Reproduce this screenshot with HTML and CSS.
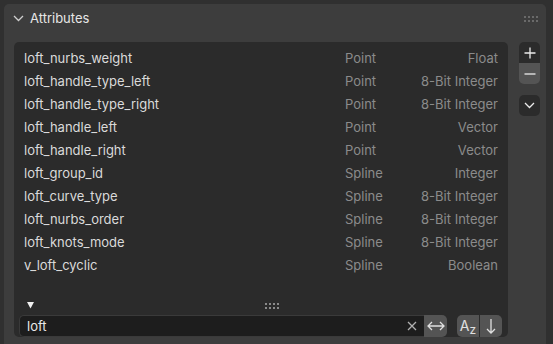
FILE: index.html
```html
<!DOCTYPE html>
<html lang="en">
<head>
    <meta charset="UTF-8">
    <title>Attributes</title>
    <link rel="stylesheet" href="styles.css">
</head>
<body>

<div class="panel">
    <div class="panel-header">
        <svg class="chevron" width="11" height="7" viewBox="0 0 11 7">
            <path d="M1 1 L5.5 5.5 L10 1" fill="none" stroke="#cfcfcf" stroke-width="1.3"/>
        </svg>
        <span class="panel-title">Attributes</span>
        <div class="grip header-grip">
            <i></i><i></i><i></i><i></i><i></i><i></i><i></i><i></i>
        </div>
    </div>

    <div class="panel-body">
        <div class="list-box">
            <div class="rows">
                <div class="row"><span class="name">loft_nurbs_weight</span><span class="domain">Point</span><span class="type">Float</span></div>
                <div class="row"><span class="name">loft_handle_type_left</span><span class="domain">Point</span><span class="type">8-Bit Integer</span></div>
                <div class="row"><span class="name">loft_handle_type_right</span><span class="domain">Point</span><span class="type">8-Bit Integer</span></div>
                <div class="row"><span class="name">loft_handle_left</span><span class="domain">Point</span><span class="type">Vector</span></div>
                <div class="row"><span class="name">loft_handle_right</span><span class="domain">Point</span><span class="type">Vector</span></div>
                <div class="row"><span class="name">loft_group_id</span><span class="domain">Spline</span><span class="type">Integer</span></div>
                <div class="row"><span class="name">loft_curve_type</span><span class="domain">Spline</span><span class="type">8-Bit Integer</span></div>
                <div class="row"><span class="name">loft_nurbs_order</span><span class="domain">Spline</span><span class="type">8-Bit Integer</span></div>
                <div class="row"><span class="name">loft_knots_mode</span><span class="domain">Spline</span><span class="type">8-Bit Integer</span></div>
                <div class="row"><span class="name">v_loft_cyclic</span><span class="domain">Spline</span><span class="type">Boolean</span></div>
            </div>

            <div class="list-footer">
                <svg class="filter-toggle" width="7" height="7" viewBox="0 0 7 7">
                    <path d="M0 0 H7 L3.5 6.5 Z" fill="#f0f0f0"/>
                </svg>
                <div class="grip resize-grip">
                    <i></i><i></i><i></i><i></i><i></i><i></i><i></i><i></i>
                </div>
            </div>

            <div class="filter-bar">
                <div class="search">
                    <span class="search-text">loft</span>
                    <svg class="clear" width="10" height="10" viewBox="0 0 10 10">
                        <path d="M1 1 L9 9 M9 1 L1 9" stroke="#b0b0b0" stroke-width="1.3"/>
                    </svg>
                </div>
                <button class="btn invert">
                    <svg width="18" height="10" viewBox="0 0 18 10">
                        <path d="M1 5 H17 M5 1 L1 5 L5 9 M13 1 L17 5 L13 9" fill="none" stroke="#e0e0e0" stroke-width="1.3"/>
                    </svg>
                </button>
                <div class="btn-group">
                    <button class="btn sort-alpha"><span class="big">A</span><span class="small">z</span></button>
                    <button class="btn sort-dir">
                        <svg width="10" height="16" viewBox="0 0 10 16">
                            <path d="M5 1 V15 M1 11 L5 15 L9 11" fill="none" stroke="#e0e0e0" stroke-width="1.3"/>
                        </svg>
                    </button>
                </div>
            </div>
        </div>

        <div class="side-buttons">
            <div class="stack">
                <button class="side-btn">
                    <svg width="12" height="12" viewBox="0 0 12 12">
                        <path d="M6 0.5 V11.5 M0.5 6 H11.5" stroke="#ececec" stroke-width="1.3"/>
                    </svg>
                </button>
                <button class="side-btn active">
                    <svg width="12" height="12" viewBox="0 0 12 12">
                        <path d="M0.5 6 H11.5" stroke="#ececec" stroke-width="1.3"/>
                    </svg>
                </button>
            </div>
            <button class="side-btn single">
                <svg width="11" height="7" viewBox="0 0 11 7">
                    <path d="M1 1 L5.5 5.5 L10 1" fill="none" stroke="#ececec" stroke-width="1.3"/>
                </svg>
            </button>
        </div>
    </div>
</div>

</body>
</html>
```

FILE: styles.css
```css
* {
    margin: 0;
    padding: 0;
    box-sizing: border-box;
}

body {
    background-color: #303030;
    font-family: Inter, "Noto Sans", sans-serif;
    color: #d9d9d9;
    height: 344px;
    overflow: hidden;
}

.panel {
    margin: 4px 7px 0 4px;
    height: 340px;
    background-color: #3d3d3d;
    border-radius: 5px 5px 0 0;
}

/* Header */
.panel-header {
    height: 28px;
    display: flex;
    align-items: center;
    padding-left: 9px;
    padding-right: 8px;
}

.chevron {
    margin-right: 6px;
}

.panel-title {
    font-size: 13px;
    color: #e6e6e6;
    flex: 1;
}

.grip {
    display: grid;
    grid-template-columns: repeat(4, 2px);
    grid-auto-rows: 2px;
    column-gap: 2px;
    row-gap: 2px;
}

.grip i {
    background-color: #6a6a6a;
}

.header-grip {
    margin-top: 2px;
}

/* Body */
.panel-body {
    display: flex;
    padding: 10px 0 0 10px;
    gap: 11px;
}

.list-box {
    width: 494px;
    height: 295px;
    background-color: #2b2b2b;
    border-radius: 5px;
    padding: 4px 5px 0 5px;
    display: flex;
    flex-direction: column;
}

.row {
    height: 23px;
    display: flex;
    align-items: center;
    font-size: 13px;
    padding: 0 5px;
}

.name {
    width: 321px;
    color: #dadada;
}

.domain {
    width: 60px;
    color: #8b8b8b;
}

.type {
    flex: 1;
    text-align: right;
    color: #8b8b8b;
}

.list-footer {
    position: relative;
    height: 28px;
    margin-top: 20px;
}

.filter-toggle {
    position: absolute;
    left: 8px;
    top: 6px;
}

.resize-grip {
    position: absolute;
    left: 246px;
    top: 7px;
}

.resize-grip i {
    background-color: #8a8a8a;
}

.filter-bar {
    display: flex;
    align-items: center;
    height: 22px;
}

.search {
    width: 405px;
    height: 22px;
    background-color: #1d1d1d;
    border: 1px solid #3a3a3a;
    border-right: none;
    border-radius: 5px 0 0 5px;
    display: flex;
    align-items: center;
    padding: 0 7px 0 7px;
}

.search-text {
    flex: 1;
    font-size: 13px;
    color: #e8e8e8;
}

.btn {
    background-color: #545454;
    border: none;
    height: 22px;
    display: flex;
    align-items: center;
    justify-content: center;
    color: #e0e0e0;
    font-family: inherit;
}

.invert {
    width: 23px;
    border-radius: 0 5px 5px 0;
}

.btn-group {
    display: flex;
    margin-left: 10px;
    gap: 1px;
}

.sort-alpha {
    width: 22px;
    border-radius: 5px 0 0 5px;
    font-size: 14px;
    align-items: flex-start;
    padding-top: 2px;
}

.sort-alpha .small {
    font-size: 12px;
    margin-top: 5px;
}

.sort-dir {
    width: 22px;
    border-radius: 0 5px 5px 0;
}

/* Side buttons */
.side-buttons {
    display: flex;
    flex-direction: column;
    gap: 11px;
}

.stack {
    display: flex;
    flex-direction: column;
}

.side-btn {
    width: 21px;
    height: 21px;
    background-color: #2b2b2b;
    border: none;
    display: flex;
    align-items: center;
    justify-content: center;
}

.stack .side-btn:first-child {
    border-radius: 5px 5px 0 0;
}

.stack .side-btn.active {
    background-color: #545454;
    border-radius: 0 0 5px 5px;
}

.side-btn.single {
    border-radius: 5px;
}
```
